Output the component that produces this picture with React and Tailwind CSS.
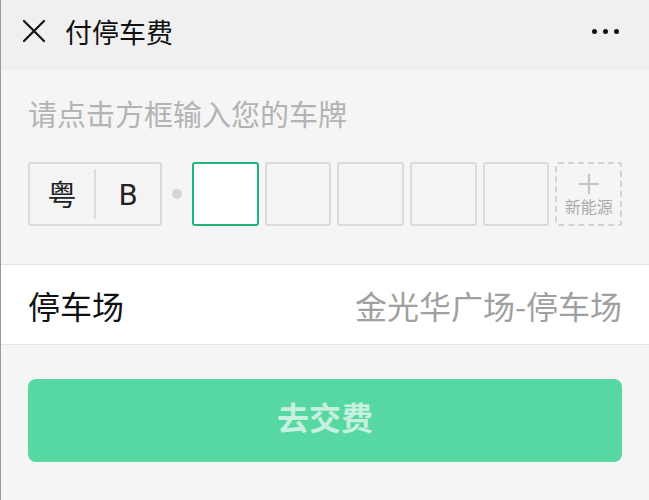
const PlateBox = ({ active }) => (
  <div
    className={`flex-1 h-full rounded-[3px] border-2 ${active ? 'border-[#1fb47a] bg-white' : 'border-[#dadada] bg-[#f4f4f4]'}`}
  />
);

const App = () => {
  const boxes = [true, false, false, false, false];

  return (
    <div
      className="w-full min-h-[500px] bg-[#f5f5f5] border-l border-[#9a9a9a] font-['Noto_Sans_CJK_SC',sans-serif]"
    >
      <div className="h-[70px] bg-[#f0f0f0] flex items-center justify-between pl-[21px] pr-[30px] pb-[8px]">
        <div className="flex items-center">
          <svg width="24" height="24" viewBox="0 0 24 24" className="text-[#111]">
            <path d="M2 2 L22 22 M22 2 L2 22" stroke="currentColor" strokeWidth="2.2" strokeLinecap="round" />
          </svg>
          <span className="ml-[19px] text-[27px] text-[#111] leading-none">付停车费</span>
        </div>
        <div className="flex items-center gap-[6px]">
          <span className="w-[5px] h-[5px] rounded-full bg-[#111]" />
          <span className="w-[5px] h-[5px] rounded-full bg-[#111]" />
          <span className="w-[5px] h-[5px] rounded-full bg-[#111]" />
        </div>
      </div>

      <div className="px-[27px]">
        <p className="pt-[23px] text-[29px] leading-[40px] text-[#b3b3b3]">请点击方框输入您的车牌</p>

        <div className="mt-[29px] h-[64px] flex items-center">
          <div className="w-[134px] h-full rounded-[3px] border-2 border-[#dadada] bg-[#f4f4f4] flex items-center">
            <span className="w-[64px] text-center text-[29px] text-[#222]">粤</span>
            <span className="w-[2px] h-[50px] bg-[#dcdcdc]" />
            <span className="flex-1 text-center text-[30px] text-[#222]" style={{ fontFamily: 'Roboto, "Noto Sans", sans-serif' }}>B</span>
          </div>
          <span className="mx-[10px] w-[10px] h-[10px] rounded-full bg-[#d5d5d5]" />
          <div className="flex-1 h-full flex gap-[6px]">
            {boxes.map((a, i) => (
              <PlateBox key={i} active={a} />
            ))}
            <div className="flex-1 h-full rounded-[3px] border-2 border-dashed border-[#d2d2d2] flex flex-col items-center justify-center">
              <svg width="22" height="22" viewBox="0 0 22 22" className="text-[#c4c4c4]">
                <path d="M11 1 V21 M1 11 H21" stroke="currentColor" strokeWidth="2.2" />
              </svg>
              <span className="mt-[2px] text-[16px] leading-[18px] text-[#aaaaaa]">新能源</span>
            </div>
          </div>
        </div>
      </div>

      <div className="mt-[38px] h-[81px] bg-white border-y border-[#e4e4e4] flex items-center justify-between px-[27px]">
        <span className="text-[32px] text-[#111]">停车场</span>
        <span className="text-[32px] text-[#a0a0a0]">金光华广场-停车场</span>
      </div>

      <div className="px-[27px] pt-[34px]">
        <button className="w-full h-[83px] rounded-[8px] bg-[#57d7a2] text-[32px] leading-none font-bold text-[#c7f1df] pb-[10px]">
          去交费
        </button>
      </div>
    </div>
  );
};

export default App;
